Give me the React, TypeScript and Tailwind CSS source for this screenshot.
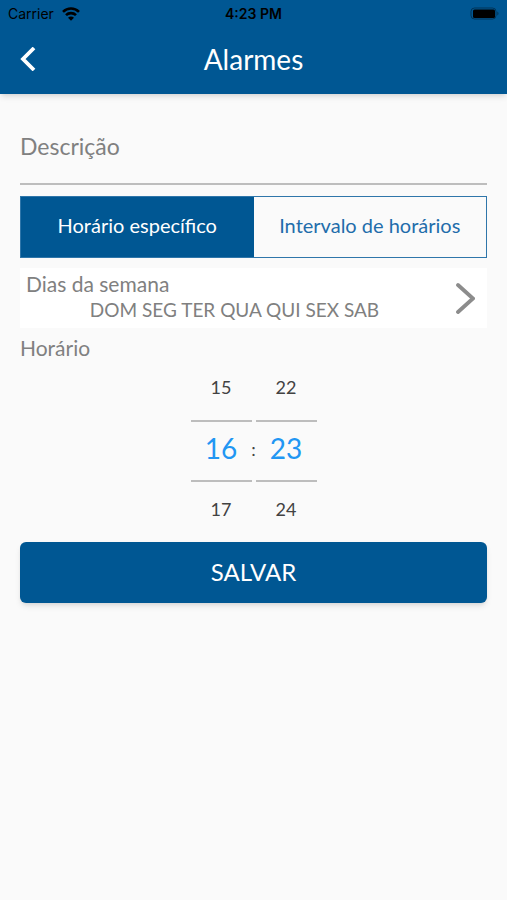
import { useState } from 'react';

const days = ['DOM', 'SEG', 'TER', 'QUA', 'QUI', 'SEX', 'SAB'];

const pad = (value: number) => String(value).padStart(2, '0');

const StatusBar = () => (
  <div className="grid grid-cols-3 items-center h-7 pl-2 pr-2 font-['Inter',sans-serif] text-sm text-black">
    <div className="flex items-center gap-2">
      <span>Carrier</span>
      <svg className="w-[18px] h-[14px]" viewBox="0 0 18 14" fill="none" stroke="currentColor" strokeWidth="2.6">
        <path d="M1 4.900C5.500.4 12.500.4 17 4.900" />
        <path d="M4 8.200c2.800-2.800 7.200-2.800 10 0" />
        <path d="M9 13.800 6 10.800c1.700-1.600 4.300-1.600 6 0z" fill="currentColor" stroke="none" />
      </svg>
    </div>
    <span className="text-center font-semibold">4:23 PM</span>
    <svg className="justify-self-end w-[30px] h-[14px]" viewBox="0 0 30 14">
      <rect x="2" y="1" width="25" height="11" rx="3.500" fill="none" stroke="#000" strokeOpacity="0.4" />
      <rect x="4" y="2.500" width="22" height="8.500" rx="1.500" fill="#000" />
      <path d="M28.300 4.500v4c1.600-.6 1.600-3.400 0-4z" fill="#000" fillOpacity="0.4" />
    </svg>
  </div>
);

interface WheelProps {
  label: string;
  value: number;
  max: number;
  onChange: (value: number) => void;
}

const Wheel = ({ label, value, max, onChange }: WheelProps) => {
  const previous = (value + max - 1) % max;
  const next = (value + 1) % max;

  return (
    <div role="group" aria-label={label} className="flex flex-col w-[61px] text-[#424242]">
      <button type="button" onClick={() => onChange(previous)} className="h-[60px] pb-1.5 text-lg">
        {pad(previous)}
      </button>
      <output className="flex items-center justify-center h-[62px] border-y-2 border-[#bdbdbd] pb-1.5 text-[28px] text-[#2196f3]">
        {pad(value)}
      </output>
      <button type="button" onClick={() => onChange(next)} className="h-[60px] pb-1.5 text-lg">
        {pad(next)}
      </button>
    </div>
  );
};

export default function App() {
  const [mode, setMode] = useState('specific');
  const [hour, setHour] = useState(16);
  const [minute, setMinute] = useState(23);

  const tabs = [
    { id: 'specific', name: 'Horário específico' },
    { id: 'interval', name: 'Intervalo de horários' },
  ];

  return (
    <div className="min-h-screen bg-[#fafafa] font-['Lato',sans-serif] text-[#808080]">
      {/* App bar */}
      <header className="bg-[#005793] shadow-md">
        <StatusBar />
        <div className="grid grid-cols-[56px_1fr_56px] items-center h-[66px] pb-1">
          <button type="button" aria-label="Voltar" className="flex items-center h-full pl-5 text-white">
            <svg className="w-4 h-6" viewBox="0 0 16 24" fill="none" stroke="currentColor" strokeWidth="3.800">
              <path d="M14 1 3 12l11 11" />
            </svg>
          </button>
          <h1 className="text-center text-[28px] leading-8 text-white">Alarmes</h1>
        </div>
      </header>

      <main className="px-5 pt-[25px]">
        <input
          type="text"
          aria-label="Descrição"
          placeholder="Descrição"
          className="block w-full h-[66px] pb-2.5 border-b-2 border-[#bdbdbd] bg-transparent text-[23px] placeholder:text-[#808080] outline-none"
        />

        <div className="grid grid-cols-2 mt-[11px] h-[62px] border border-[#2f76aa]">
          {tabs.map((tab) => (
            <button
              key={tab.id}
              type="button"
              aria-pressed={mode === tab.id}
              onClick={() => setMode(tab.id)}
              className={`pb-1 text-xl ${mode === tab.id ? 'bg-[#005793] text-white' : 'text-[#1f6dab]'}`}
            >
              {tab.name}
            </button>
          ))}
        </div>

        <button type="button" className="flex items-center w-full h-[60px] mt-2.5 pl-1.5 pr-3 bg-white text-left">
          <span className="flex-1 pb-0.5">
            <span className="block text-[21px] leading-[26px]">Dias da semana</span>
            <span className="block pr-3 text-center text-[19px] leading-[26px]">{days.join(' ')}</span>
          </span>
          <svg className="w-5 h-8" viewBox="0 0 20 32" fill="none" stroke="#8c8c8c" strokeWidth="3.800" strokeLinecap="round">
            <path d="m3 3 15 13.500L3 30" />
          </svg>
        </button>

        <h2 className="mt-2 text-[21px] leading-6">Horário</h2>

        <div className="flex items-center justify-center">
          <Wheel label="Hora" value={hour} max={24} onChange={setHour} />
          <span className="w-1 flex justify-center pb-1 text-lg text-[#424242]">:</span>
          <Wheel label="Minuto" value={minute} max={60} onChange={setMinute} />
        </div>

        <button type="button" className="w-full h-[61px] pb-0.5 rounded-md bg-[#005793] text-2xl text-white shadow-md">
          SALVAR
        </button>
      </main>
    </div>
  );
}
